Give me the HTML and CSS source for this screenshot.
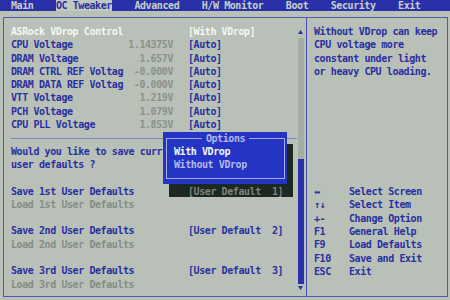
FILE: index.html
```html
<!DOCTYPE html>
<html>
<head>
<meta charset="utf-8">
<link rel="stylesheet" href="styles.css">
</head>
<body>
<nav class="tabs">
  <span class="tab">Main</span>
  <span class="tab active">OC Tweaker</span>
  <span class="tab">Advanced</span>
  <span class="tab">H/W Monitor</span>
  <span class="tab">Boot</span>
  <span class="tab">Security</span>
  <span class="tab">Exit</span>
</nav>
<main class="frame">
  <section class="left">
    <div class="content">
      <div class="row sel"><span class="label">ASRock VDrop Control</span><span class="val"></span><span class="opt">[With VDrop]</span></div>
      <div class="row"><span class="label">CPU Voltage</span><span class="val">1.14375V</span><span class="opt">[Auto]</span></div>
      <div class="row"><span class="label">DRAM Voltage</span><span class="val">1.657V</span><span class="opt">[Auto]</span></div>
      <div class="row"><span class="label">DRAM CTRL REF Voltag</span><span class="val">-0.000V</span><span class="opt">[Auto]</span></div>
      <div class="row"><span class="label">DRAM DATA REF Voltag</span><span class="val">-0.000V</span><span class="opt">[Auto]</span></div>
      <div class="row"><span class="label">VTT Voltage</span><span class="val">1.219V</span><span class="opt">[Auto]</span></div>
      <div class="row"><span class="label">PCH Voltage</span><span class="val">1.079V</span><span class="opt">[Auto]</span></div>
      <div class="row"><span class="label">CPU PLL Voltage</span><span class="val">1.853V</span><span class="opt">[Auto]</span></div>
      <div class="sep"></div>
      <div class="line">Would you like to save curr</div>
      <div class="line">user defaults ?</div>
      <div class="blank"></div>
      <div class="row"><span class="label">Save 1st User Defaults</span><span class="val"></span><span class="opt shaded">[User Default  1]</span></div>
      <div class="line dim">Load 1st User Defaults</div>
      <div class="blank"></div>
      <div class="row"><span class="label">Save 2nd User Defaults</span><span class="val"></span><span class="opt">[User Default  2]</span></div>
      <div class="line dim">Load 2nd User Defaults</div>
      <div class="blank"></div>
      <div class="row"><span class="label">Save 3rd User Defaults</span><span class="val"></span><span class="opt">[User Default  3]</span></div>
      <div class="line dim">Load 3rd User Defaults</div>
    </div>
    <div class="scrollbar">
      <svg class="arrow" width="7" height="6" viewBox="0 0 7 6"><polygon points="1,5 6,5 3.5,1" fill="#2a30a8"/></svg>
      <div class="track"><div class="thumb"></div></div>
      <svg class="arrow" width="7" height="6" viewBox="0 0 7 6"><polygon points="1,1 6,1 3.5,5" fill="#2a30a8"/></svg>
    </div>
  </section>
  <aside class="right">
    <p class="help">Without VDrop can keep<br>CPU voltage more<br>constant under light<br>or heavy CPU loading.</p>
    <dl class="keys">
      <dt>↔</dt><dd>Select Screen</dd>
      <dt>↑↓</dt><dd>Select Item</dd>
      <dt>+-</dt><dd>Change Option</dd>
      <dt>F1</dt><dd>General Help</dd>
      <dt>F9</dt><dd>Load Defaults</dd>
      <dt>F10</dt><dd>Save and Exit</dd>
      <dt>ESC</dt><dd>Exit</dd>
    </dl>
  </aside>
</main>
<div class="shadow"></div>
<div class="popup">
  <fieldset>
    <legend>Options</legend>
    <div class="item on">With VDrop</div>
    <div class="item">Without VDrop</div>
  </fieldset>
</div>
</body>
</html>
```
FILE: styles.css
```css
* { box-sizing: border-box; }
html, body { margin: 0; padding: 0; }
body {
  width: 450px;
  height: 300px;
  overflow: hidden;
  position: relative;
  background: #b8c0b8;
  font-family: "DejaVu Sans Mono", "Liberation Mono", monospace;
  font-weight: bold;
  font-size: 10px;
  letter-spacing: -0.42px;
  line-height: 13.3px;
  color: #2a30a0;
}
.tabs {
  display: flex;
  gap: 22.5px;
  height: 11px;
  padding-left: 11px;
  background: #2a30a8;
  color: #c8d0c8;
  line-height: 11px;
}
.tab { white-space: nowrap; }
.tab.active { background: #c0c8c0; color: #2a30a0; }

.frame {
  display: flex;
  width: 445px;
  height: 280px;
  margin: 6px 0 0 3px;
  border: 1px solid #5058b0;
}
.left { display: flex; width: 302px; }
.content { flex: 1; padding: 7px 0 0 7px; }
.row {
  display: grid;
  grid-template-columns: 112px 50px 1fr;
  height: 13.3px;
}
.label, .val, .opt, .line { white-space: pre; }
.val { text-align: right; color: #8a928a; }
.opt { padding-left: 15px; }
.sel { color: #f4f6f4; }
.line, .blank { height: 13.3px; }
.dim { color: #868e86; }
.sep { height: 13.3px; display: flex; align-items: center; }
.sep::before { content: ""; display: block; width: 100%; height: 1px; background: #7c84c4; }
.shaded { position: relative; z-index: 2; color: #7a847a; }

.scrollbar {
  display: flex;
  flex-direction: column;
  align-items: center;
  width: 7px;
  margin-right: 2px;
  padding: 11px 0 5px;
}
.arrow { display: block; flex: none; }
.track {
  flex: 1;
  width: 6px;
  margin: 3px 0 1px;
  background: #a4aca4;
  display: flex;
  flex-direction: column;
}
.thumb { margin-top: auto; height: 125px; background: #2a30a8; }

.right {
  width: 141px;
  border-left: 1px solid #4850b0;
  padding: 7px 0 0 7px;
}
.help { margin: 0; white-space: nowrap; }
.keys {
  margin: 107px 0 0;
  display: grid;
  grid-template-columns: 35px auto;
}
.keys dt, .keys dd { margin: 0; white-space: nowrap; }

.shadow {
  position: absolute;
  left: 169px;
  top: 144px;
  width: 124px;
  height: 53px;
  background: #1e2822;
  z-index: 1;
}
.popup {
  position: absolute;
  left: 163px;
  top: 132px;
  width: 124px;
  height: 52px;
  padding: 0 2px 0 3px;
  background: #2434c4;
  z-index: 3;
  white-space: nowrap;
}
.popup fieldset {
  margin: 0;
  padding: 0;
  height: 47px;
  border: 1px solid #a4ace0;
  min-width: 0;
}
.popup legend {
  margin: 0 auto;
  padding: 0 4px;
  line-height: 13px;
  color: #b0b8e8;
}
.item { padding-left: 7px; color: #b0b8e8; }
.item.on { color: #f4f6f4; }
```
